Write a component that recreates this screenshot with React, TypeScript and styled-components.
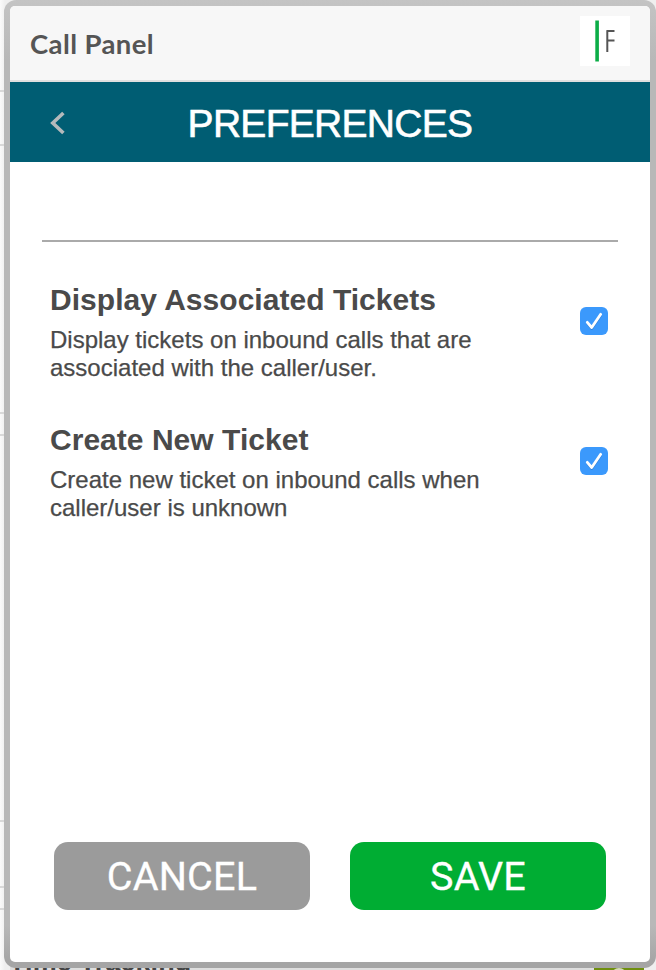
import React, { useState } from "react";
import styled, { createGlobalStyle } from "styled-components";

const GlobalStyle = createGlobalStyle`
  * { box-sizing: border-box; }
  html, body { margin: 0; padding: 0; overflow: hidden; }
  body { font-family: "Liberation Sans", Arial, sans-serif; background: #fafafa; }
  button, h1, h2, p { margin: 0; padding: 0; border: 0; font: inherit; }
`;

const Page = styled.div`
  position: relative;
  width: 656px;
  height: 970px;
  overflow: hidden;
  background: linear-gradient(to right, #fbfbfb, #efefef 5px);
`;

const Backdrop = styled.div`
  position: absolute;
  inset: 0;
`;

const BackdropLine = styled.div<{ $top: number }>`
  position: absolute;
  left: 0;
  top: ${(p) => p.$top}px;
  width: 10px;
  height: 2px;
  background: #d9d9d9;
`;

const BackdropFooter = styled.div`
  position: absolute;
  left: 10px;
  right: 12px;
  top: 945px;
  height: 60px;
  background: #dedede;
`;

const BackdropLabel = styled.div`
  position: absolute;
  left: 9px;
  top: 946px;
  color: #444;
  font: bold 27px/32px "Liberation Sans", Arial, sans-serif;
  letter-spacing: 0.1px;
  white-space: nowrap;
`;

const BackdropBadge = styled.svg`
  position: absolute;
  left: 594px;
  top: 960px;
`;

const Frame = styled.main`
  position: relative;
  display: flex;
  margin-left: 4px;
  width: 652px;
  height: 968px;
  padding: 6px;
  border-radius: 12px;
  background: linear-gradient(to bottom, #c4c4c4 0, #b8b8b8 60px, #b8b8b8 925px, #a5a5a5 962px, #a5a5a5 100%);
`;

const Panel = styled.div`
  flex: 1;
  display: flex;
  flex-direction: column;
  overflow: hidden;
  border-radius: 5px;
  background: #fff;
`;

const Header = styled.header`
  display: flex;
  align-items: center;
  justify-content: space-between;
  height: 76px;
  padding: 0 20px;
  background: #f7f7f7;
  border-bottom: 2px solid #e0e0e0;
`;

const AppName = styled.div`
  color: #555;
  font: 700 27.5px/36px Lato, "Open Sans", sans-serif;
  letter-spacing: 0.4px;
  padding-top: 2px;
`;

const Logo = styled.svg`
  display: block;
  margin-top: -4px;
`;

const TitleBar = styled.div`
  display: grid;
  grid-template-columns: 96px 1fr 96px;
  align-items: center;
  height: 80px;
  background: #005d73;
`;

const BackButton = styled.button`
  display: flex;
  justify-content: center;
  padding-top: 2px;
  background: none;
  cursor: pointer;
`;

const Title = styled.h1`
  color: #fff;
  font-size: 39px;
  line-height: 46px;
  letter-spacing: -0.7px;
  -webkit-text-stroke: 0.6px #fff;
  text-align: center;
  white-space: nowrap;
  padding-top: 4px;
`;

const Rule = styled.div`
  margin: 78px 32px 0;
  height: 2px;
  background: #aaa;
`;

const Options = styled.div`
  display: flex;
  flex-direction: column;
  flex: 1;
  padding: 40px 42px 0 40px;
`;

const Option = styled.label`
  display: flex;
  justify-content: space-between;
  height: 140px;
  cursor: pointer;
`;

const OptionText = styled.div`
  width: 450px;
  color: #4a4a4a;
`;

const OptionTitle = styled.h2`
  font-size: 30px;
  font-weight: bold;
  line-height: 36px;
  letter-spacing: 0.03px;
`;

const OptionDetail = styled.p`
  margin-top: 8px;
  font-size: 24px;
  line-height: 28px;
  -webkit-text-stroke: 0.25px #4a4a4a;
`;

const HiddenInput = styled.input`
  appearance: none;
  width: 0;
  height: 0;
  margin: 0;
`;

const Box = styled.span<{ $on: boolean }>`
  flex: none;
  margin-top: 25px;
  width: 28px;
  height: 28px;
  border-radius: 6px;
  background: ${(p) => (p.$on ? "#3b99fc" : "#ddd")};
`;

const Actions = styled.footer`
  display: flex;
  gap: 40px;
  padding: 0 44px 52px;
`;

const ActionButton = styled.button<{ $primary?: boolean }>`
  flex: 1;
  height: 68px;
  padding-top: 2px;
  border-radius: 14px;
  color: #fff;
  background: ${(p) => (p.$primary ? "#00ad33" : "#9b9b9b")};
  font: 400 39.5px/66px Roboto, sans-serif;
  letter-spacing: 0.2px;
  -webkit-text-stroke: 0.3px #fff;
  cursor: pointer;
`;

const preferences = [
  {
    id: "associated",
    title: "Display Associated Tickets",
    lines: ["Display tickets on inbound calls that are", "associated with the caller/user."],
  },
  {
    id: "create",
    title: "Create New Ticket",
    lines: ["Create new ticket on inbound calls when", "caller/user is unknown"],
  },
];

function Preference({ title, lines }: { title: string; lines: string[] }) {
  const [on, setOn] = useState(true);
  return (
    <Option>
      <OptionText>
        <OptionTitle>{title}</OptionTitle>
        <OptionDetail>
          {lines[0]}
          <br />
          {lines[1]}
        </OptionDetail>
      </OptionText>
      <HiddenInput type="checkbox" checked={on} onChange={() => setOn(!on)} />
      <Box $on={on}>
        {on && (
          <svg width="28" height="28" viewBox="0 0 28 28" fill="none" strokeLinecap="round" strokeLinejoin="round">
            <path d="M7.5 16.2l4.2 5.3L20.5 8.5" stroke="#2f7fd6" strokeWidth="2.8" />
            <path d="M7.3 15.3l4.4 5.2L20.7 7.3" stroke="#fff" strokeWidth="2.8" />
          </svg>
        )}
      </Box>
    </Option>
  );
}

export default function App() {
  return (
    <Page>
      <GlobalStyle />
      <Backdrop>
        {[90, 144, 412, 434, 820, 886, 908].map((top) => (
          <BackdropLine key={top} $top={top} />
        ))}
        <BackdropFooter />
        <BackdropLabel>Time Tracking</BackdropLabel>
        <BackdropBadge width="50" height="50" viewBox="0 0 50 50">
          <rect width="50" height="50" fill="#6f8f0e" />
          <circle cx="25" cy="16" r="8" fill="#d5dcb8" />
        </BackdropBadge>
      </Backdrop>
      <Frame>
        <Panel>
          <Header>
            <AppName>Call Panel</AppName>
            <Logo width="50" height="50" viewBox="0 0 50 50">
              <rect width="50" height="50" fill="#fff" />
              <rect x="15.3" y="4.5" width="3.6" height="41" fill="#0cad47" />
              <path d="M27.3 36V15M26.4 15H34.5M27.3 24.6H34.5" fill="none" stroke="#555" strokeWidth="2" />
            </Logo>
          </Header>
          <TitleBar>
            <BackButton aria-label="Back">
              <svg width="18" height="26" viewBox="0 0 18 26" fill="none">
                <path d="M14.4 3L3.8 13l10.6 10" stroke="#b4b9bb" strokeWidth="3.6" />
              </svg>
            </BackButton>
            <Title>PREFERENCES</Title>
          </TitleBar>
          <Rule />
          <Options>
            {preferences.map((p) => (
              <Preference key={p.id} title={p.title} lines={p.lines} />
            ))}
          </Options>
          <Actions>
            <ActionButton>CANCEL</ActionButton>
            <ActionButton $primary>SAVE</ActionButton>
          </Actions>
        </Panel>
      </Frame>
    </Page>
  );
}
